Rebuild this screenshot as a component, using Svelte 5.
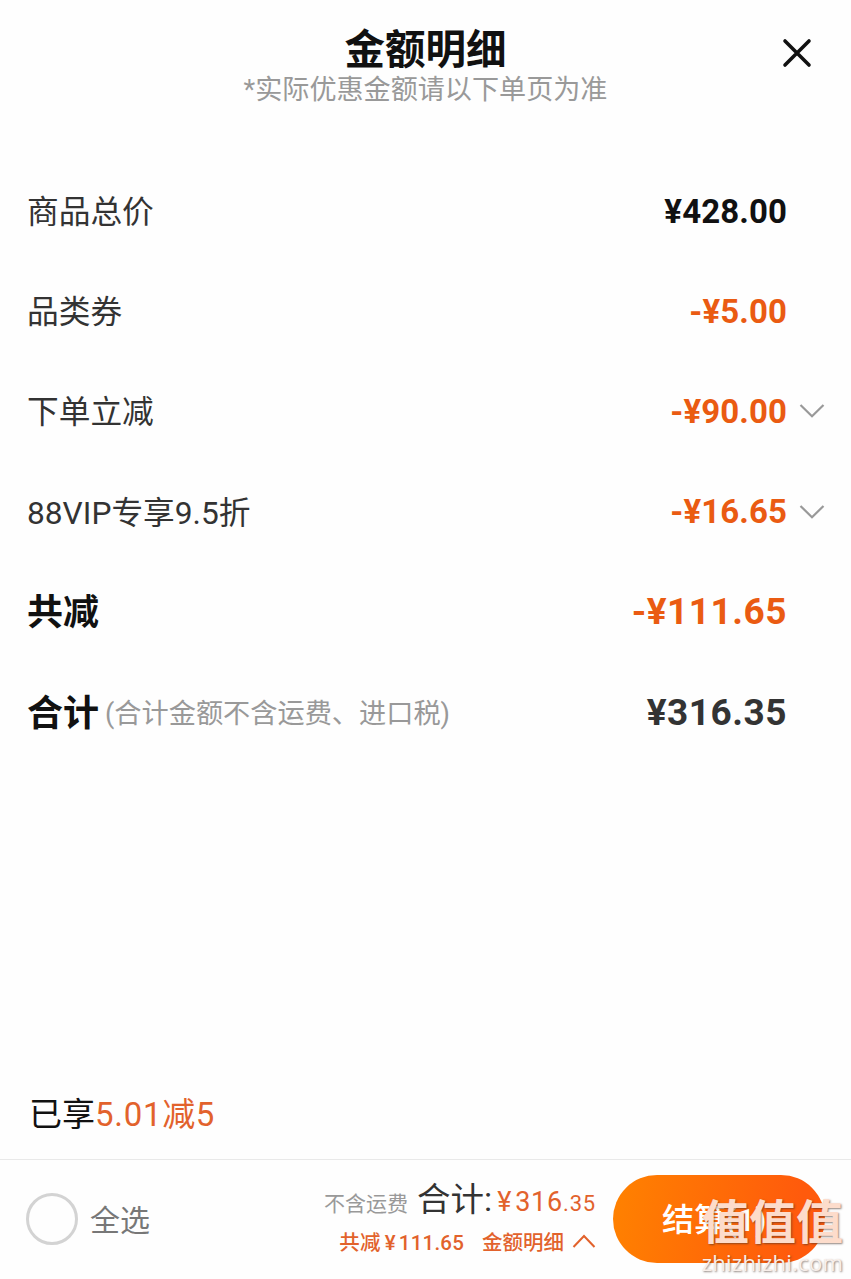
<script>
	const rows = [
		{ label: '商品总价', price: '¥428.00' },
		{ label: '品类券', price: '-¥5.00', off: true },
		{ label: '下单立减', price: '-¥90.00', off: true, more: true },
		{ label: '88VIP专享9.5折', price: '-¥16.65', off: true, more: true },
		{ label: '共减', price: '-¥111.65', off: true, big: true },
		{ label: '合计', note: '(合计金额不含运费、进口税)', price: '¥316.35', big: true, dark: true }
	];
</script>

<div class="sheet">
	<header>
		<div class="titles">
			<h1>金额明细</h1>
			<p>*实际优惠金额请以下单页为准</p>
		</div>
		<button class="close" aria-label="关闭">
			<svg width="30" height="30" viewBox="0 0 30 30">
				<path d="M3 3 27 27M27 3 3 27" fill="none" stroke="#111" stroke-width="3.6" stroke-linecap="round" />
			</svg>
		</button>
	</header>

	<main>
		{#each rows as row}
			<div class="row" class:big={row.big}>
				<span class="label">{row.label}</span>
				{#if row.note}<span class="note">{row.note}</span>{/if}
				<span class="price" class:off={row.off} class:dark={row.dark}>{row.price}</span>
				<span class="arrow">
					{#if row.more}
						<svg width="26" height="16" viewBox="0 0 26 16">
							<path d="M1.5 2 13 13.2 24.5 2" fill="none" stroke="#999" stroke-width="2.2" />
						</svg>
					{/if}
				</span>
			</div>
		{/each}
	</main>

	<div class="enjoyed">已享<span>5.01减5</span></div>

	<footer>
		<label class="all">
			<span class="circle"></span>
			<span>全选</span>
		</label>
		<div class="sum">
			<div class="line-total">
				<span class="fee">不含运费</span>
				<span class="total">合计:</span>
				<span class="amount"><span class="yen">¥</span>316<small>.35</small></span>
			</div>
			<div class="line-detail">
				<span class="cut">共减<span class="yen">¥</span>111.65</span>
				<span class="detail">金额明细</span>
				<svg width="24" height="16" viewBox="0 0 24 16">
					<path d="M1.5 14 12 3 22.5 14" fill="none" stroke="#e2622c" stroke-width="2" />
				</svg>
			</div>
		</div>
		<button class="pay">结算(1)</button>
	</footer>

	<div class="watermark">
		<strong>值值值</strong>
		<span>zhizhizhi.com</span>
	</div>
</div>

<style>
	:global(body) {
		background: #fefefe;
	}

	.sheet {
		position: relative;
		box-sizing: border-box;
		width: 851px;
		height: 1279px;
		overflow: hidden;
		display: flex;
		flex-direction: column;
		background: #fefefe;
		color: #333;
		font-family: Roboto, 'Noto Sans CJK SC', sans-serif;
	}

	button {
		border: 0;
		padding: 0;
		background: none;
		font-family: inherit;
	}

	header {
		display: grid;
		grid-template-columns: 82px 1fr 82px;
		height: 161px;
	}

	.titles {
		grid-column: 2;
		padding-top: 26px;
		text-align: center;
	}

	h1 {
		margin: 0;
		font-size: 40.5px;
		line-height: 48px;
		font-weight: 700;
		color: #111;
	}

	p {
		margin: 0;
		font-size: 27.1px;
		line-height: 33px;
		color: #999;
		white-space: nowrap;
	}

	.close {
		align-self: start;
		justify-self: start;
		margin: 38px 0 0 13px;
		height: 30px;
	}

	svg {
		display: block;
	}

	.row {
		display: flex;
		align-items: center;
		height: 100.2px;
		padding: 0 26px 0 27px;
		white-space: nowrap;
	}

	.label {
		padding-bottom: 4px;
		font-size: 31.7px;
	}

	.big .label {
		padding-bottom: 5px;
		font-size: 36px;
		font-weight: 700;
		color: #111;
	}

	.note {
		margin-left: 6px;
		padding-bottom: 3px;
		font-size: 27.2px;
		color: #999;
	}

	.price {
		margin-left: auto;
		font-size: 33px;
		font-weight: 700;
		letter-spacing: 0.1px;
		color: #111;
	}

	.big .price {
		font-size: 37px;
		letter-spacing: 0.5px;
	}

	.price.off {
		color: #ea5b12;
	}

	.price.dark {
		color: #333;
	}

	.arrow {
		width: 26px;
		margin-left: 12px;
	}

	.enjoyed {
		margin-top: auto;
		height: 90px;
		padding-left: 29px;
		line-height: 92px;
		font-size: 33px;
		color: #111;
	}

	.enjoyed span {
		letter-spacing: 0.7px;
		color: #e2622c;
	}

	footer {
		display: flex;
		align-items: center;
		box-sizing: border-box;
		height: 120px;
		padding: 0 26px 1px;
		border-top: 1px solid #e9e9e9;
	}

	.all {
		display: flex;
		align-items: center;
		gap: 12px;
		font-size: 30px;
		color: #777;
	}

	.all span:last-child {
		padding-bottom: 3px;
	}

	.circle {
		box-sizing: border-box;
		width: 52px;
		height: 52px;
		border: 3px solid #d3d3d3;
		border-radius: 50%;
	}

	.sum {
		margin-left: auto;
		color: #e2622c;
		white-space: nowrap;
	}

	.line-total {
		display: flex;
		align-items: baseline;
		justify-content: flex-end;
		height: 43px;
		line-height: 41px;
	}

	.fee {
		font-size: 21px;
		color: #999;
	}

	.total {
		margin-left: 9px;
		font-size: 33.5px;
		color: #333;
	}

	.amount {
		margin-left: 5px;
		font-size: 27px;
		letter-spacing: 0.8px;
	}

	.amount small {
		font-size: 22px;
	}

	.yen {
		margin-right: 3px;
	}

	.line-detail {
		display: flex;
		align-items: center;
		justify-content: flex-end;
		height: 38px;
		font-size: 20.5px;
		font-weight: 500;
	}

	.cut {
		letter-spacing: 0.2px;
	}

	.cut .yen {
		margin-left: 4px;
	}

	.detail {
		margin: 0 8px 0 18px;
	}

	.pay {
		width: 212px;
		height: 88px;
		margin-left: 17px;
		padding: 0 0 4px 49px;
		border-radius: 44px;
		background: linear-gradient(100deg, #ff8200, #ff5a0c 85%);
		color: #fff;
		font-size: 32px;
		font-weight: 500;
		text-align: left;
	}

	/* site mark over the bottom right corner */
	.watermark {
		position: absolute;
		right: 8px;
		bottom: 3px;
		display: flex;
		flex-direction: column;
		align-items: flex-end;
		color: #fddccb;
		text-shadow: 1px 1px 2px rgba(70, 50, 40, 0.6);
	}

	.watermark strong {
		font-size: 47px;
		line-height: 50px;
		font-weight: 700;
	}

	.watermark span {
		font-family: 'Open Sans', sans-serif;
		font-size: 22px;
		line-height: 28px;
		letter-spacing: 0.25px;
		color: #f8efea;
	}
</style>
